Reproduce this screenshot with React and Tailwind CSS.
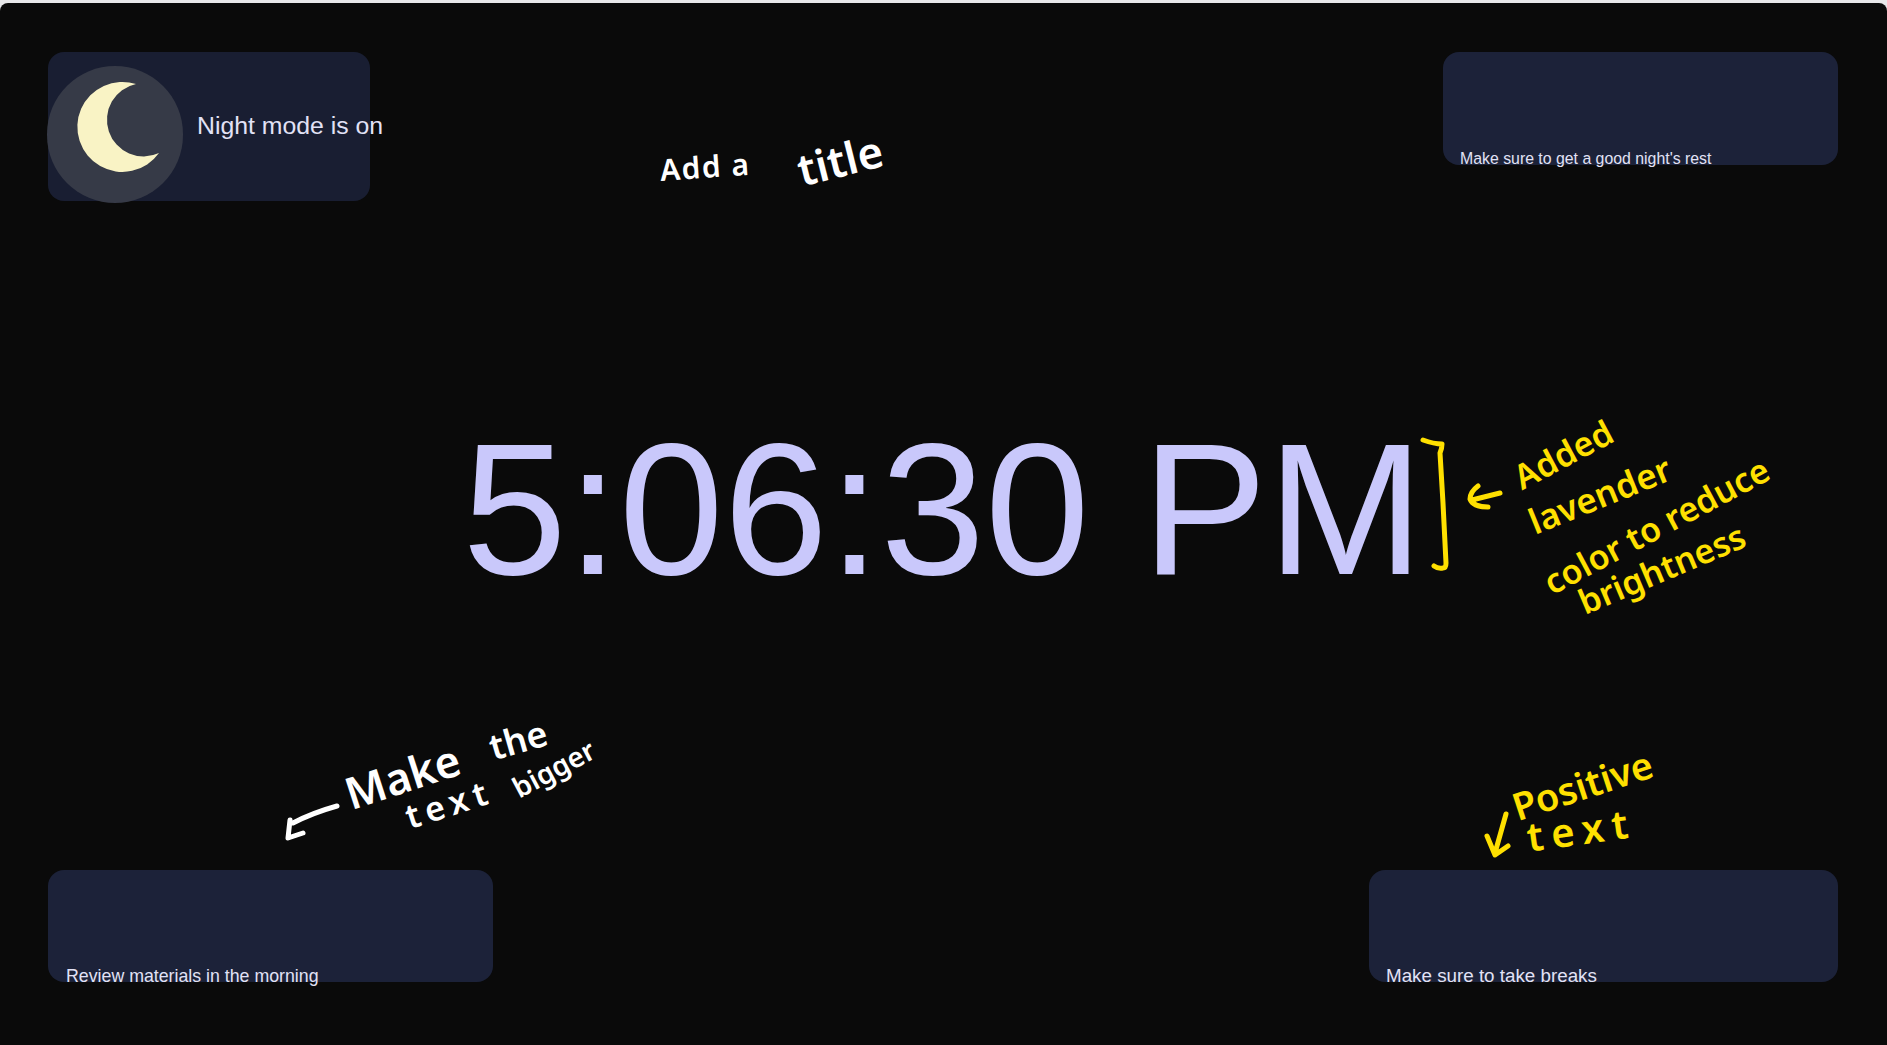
// App.jsx
import React from 'react';

const sans = 'font-["Liberation_Sans",Arial,sans-serif]';
const hand = 'absolute whitespace-nowrap origin-left font-["Noto_Sans",sans-serif] font-semibold leading-none';

const Moon = () => (
  <svg viewBox="47 66 136 137" className="w-[136px] h-[137px]">
    <path d="M136 84 A45 45 0 1 0 159 153 A36.6 36.6 0 1 1 136 84 Z" fill="#f9f3c5" />
  </svg>
);

// hand drawn arrows and the bracket, in page coordinates
const Strokes = () => (
  <svg viewBox="0 0 1887 1045" fill="none" strokeLinecap="round" strokeLinejoin="round" strokeWidth="5" className="absolute inset-0 w-[1887px] h-[1045px] pointer-events-none">
    <g stroke="#ffe000">
      <path d="M1423 440 Q1434 444 1442 444 Q1442 448 1440 453 L1443 503 L1446 563 Q1446 568 1443 568 Q1438 569 1434 566" />
      <path d="M1500 493 L1472 500 M1478 486 Q1470 492 1470 499 Q1473 507 1488 507" />
      <path d="M1506 814 L1495 853 M1487 836 L1495 855 L1508 846" />
    </g>
    <g stroke="#ffffff">
      <path d="M337 806 Q312 813 293 823 M290 820 L288 838 L303 833" />
    </g>
  </svg>
);

const App = () => {
  return (
    <div className={`relative w-full h-screen overflow-hidden bg-[#e8e8ea] pt-[3px] ${sans}`}>
      <div className="flex flex-col h-full rounded-t-lg bg-[#0a0a0a] pt-[49px] pb-[63px] pl-[48px] pr-[49px]">
        {/* Top row */}
        <div className="flex justify-between items-start">
          <div className="flex items-center w-[322px] h-[149px] rounded-2xl bg-[#191e32]">
            <div className="shrink-0 flex -ml-[1px] mt-4 rounded-full bg-[#363a47]">
              <Moon />
            </div>
            <span className="ml-[14px] -mt-[1px] whitespace-nowrap text-[24.8px] text-[#e2e2f6]">Night mode is on</span>
          </div>
          <div className="flex items-end w-[395px] h-[113px] rounded-2xl bg-[#1c2239] pl-[17px]">
            <span className="text-[15.85px] leading-[18px] -mb-[3px] text-[#e2e2f6] whitespace-nowrap">Make sure to get a good night's rest</span>
          </div>
        </div>

        {/* Clock */}
        <div className="flex-1 flex items-center justify-center pb-[54px]">
          <div className="text-[188px] leading-none whitespace-nowrap text-[#c9c8fb]">5:06:30 PM</div>
        </div>

        {/* Bottom row */}
        <div className="flex justify-between items-end">
          <div className="flex items-end w-[445px] h-[112px] rounded-2xl bg-[#1c2239] pl-[18px]">
            <span className="text-[17.75px] leading-[20px] -mb-[4px] text-[#e2e2f6] whitespace-nowrap">Review materials in the morning</span>
          </div>
          <div className="flex items-end w-[469px] h-[112px] rounded-2xl bg-[#1c2239] pl-[17px]">
            <span className="text-[18.8px] leading-[20px] -mb-[4px] text-[#e2e2f6] whitespace-nowrap">Make sure to take breaks</span>
          </div>
        </div>
      </div>

      <Strokes />

      {/* Handwritten notes */}
      <span className={`${hand} left-[660px] top-[155px] text-[30px] tracking-wider text-white rotate-[-4deg]`}>Add a</span>
      <span className={`${hand} left-[798px] top-[148px] text-[44px] text-white rotate-[-14deg]`}>title</span>

      <span className={`${hand} left-[1516px] top-[462px] text-[34px] text-[#ffe000] rotate-[-28deg]`}>Added</span>
      <span className={`${hand} left-[1530px] top-[505px] text-[35px] text-[#ffe000] rotate-[-22deg]`}>lavender</span>
      <span className={`${hand} left-[1546px] top-[567px] text-[34px] text-[#ffe000] rotate-[-28deg]`}>color to reduce</span>
      <span className={`${hand} left-[1580px] top-[586px] text-[34px] text-[#ffe000] rotate-[-23deg]`}>brightness</span>

      <span className={`${hand} left-[346px] top-[772px] text-[44px] text-white rotate-[-18deg]`}>Make</span>
      <span className={`${hand} left-[490px] top-[730px] text-[36px] text-white rotate-[-16deg]`}>the</span>
      <span className={`${hand} left-[406px] top-[800px] text-[34px] tracking-[6px] text-white rotate-[-18deg]`}>text</span>
      <span className={`${hand} left-[514px] top-[775px] text-[28px] text-white rotate-[-28deg]`}>bigger</span>

      <span className={`${hand} left-[1513px] top-[788px] text-[38px] text-[#ffe000] rotate-[-18deg]`}>Positive</span>
      <span className={`${hand} left-[1527px] top-[817px] text-[40px] tracking-[8px] text-[#ffe000] rotate-[-8deg]`}>text</span>
    </div>
  );
};

export default App;
